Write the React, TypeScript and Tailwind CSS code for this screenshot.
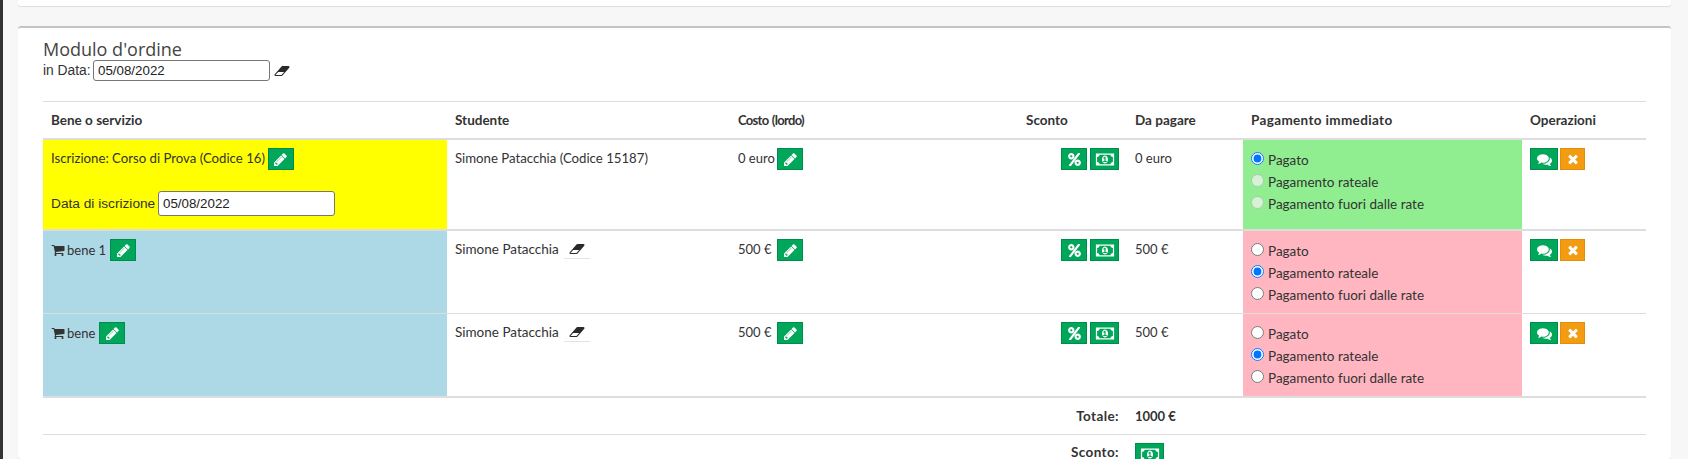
import React from "react";

const P = {
  pencil: ["0 0 1792 1792", "M491 1536l91-91-235-235-91 91v107h128v128h107zm523-928q0-22-22-22-10 0-17 7l-542 542q-7 7-7 17 0 22 22 22 10 0 17-7l542-542q7-7 7-17zm-54-192l416 416-832 832h-416v-416zm683 96q0 53-37 90l-166 166-416-416 166-165q36-38 90-38 53 0 91 38l235 234q37 39 37 91z"],
  percent: ["0 0 1792 1792", "M1408 1280q0-52-38-90t-90-38-90 38-38 90 38 90 90 38 90-38 38-90zm-768-768q0-52-38-90t-90-38-90 38-38 90 38 90 90 38 90-38 38-90zm1024 768q0 159-112.5 271.5t-271.5 112.5-271.5-112.5-112.5-271.5 112.5-271.5 271.5-112.5 271.5 112.5 112.5 271.5zm-96-1088q0 20-13 38l-1056 1408q-19 26-51 26h-160q-26 0-45-19t-19-45q0-20 13-38l1056-1408q19-26 51-26h160q26 0 45 19t19 45zm-672 320q0 159-112.5 271.5t-271.5 112.5-271.5-112.5-112.5-271.5 112.5-271.5 271.5-112.5 271.5 112.5 112.5 271.5z"],
  money: ["0 0 2048 1792", "M832 1152h384v-96h-128v-448h-114l-148 137 77 80q42-37 55-57h2v288h-128v96zm512-256q0 70-21 142t-59.5 134-101.5 101-138 39-138-39-101.5-101-59.5-134-21-142 21-142 59.5-134 101.5-101 138-39 138 39 101.5 101 59.5 134 21 142zm512 256v-512q-106 0-181-75t-75-181h-1152q0 106-75 181t-181 75v512q106 0 181 75t75 181h1152q0-106 75-181t181-75zm128-832v1152q0 26-19 45t-45 19h-1792q-26 0-45-19t-19-45v-1152q0-26 19-45t45-19h1792q26 0 45 19t19 45z"],
  comments: ["0 0 1792 1792", "M1408 768q0 139-94 257t-256.5 186.5-353.5 68.5q-86 0-176-16-124 88-278 128-36 9-86 16h-3q-11 0-20.5-8t-11.5-21q-1-3-1-6.5t.5-6.5 2-6l2.5-5 3.5-5.5 4-5 4.5-5 4-4.5q5-6 23-25t26-29.5 22.5-29 25-38.5 20.5-44q-124-72-195-177t-71-224q0-139 94-257t256.5-186.5 353.5-68.5 353.5 68.5 256.5 186.5 94 257zm384 256q0 120-71 224.5t-195 176.5q10 24 20.5 44t25 38.5 22.5 29 26 29.5 23 25q1 1 4 4.5t4.5 5 4 5 3.5 5.5l2.5 5 2 6 .5 6.5-1 6.5q-3 14-13 22t-22 7q-50-7-86-16-154-40-278-128-90 16-176 16-271 0-472-132 58 4 88 4 161 0 309-45t264-129q125-92 192-212t67-254q0-77-23-152 129 71 204 178t75 230z"],
  times: ["0 0 1792 1792", "M1490 1322q0 40-28 68l-136 136q-28 28-68 28t-68-28l-294-294-294 294q-28 28-68 28t-68-28l-136-136q-28-28-28-68t28-68l294-294-294-294q-28-28-28-68t28-68l136-136q28-28 68-28t68 28l294 294 294-294q28-28 68-28t68 28l136 136q28 28 28 68t-28 68l-294 294 294 294q28 28 28 68z"],
  eraser: ["0 0 2048 1792", "M960 1408l336-384h-768l-336 384h768zm1013-1077q15 34 9.5 71.5t-30.5 65.5l-896 1024q-38 44-96 44h-768q-38 0-69.5-20.5t-47.5-54.5q-15-34-9.5-71.5t30.5-65.5l896-1024q38-44 96-44h768q38 0 70 20.5t47 54.5z"],
  cart: ["0 0 1792 1792", "M704 1536q0 52-38 90t-90 38-90-38-38-90 38-90 90-38 90 38 38 90zm896 0q0 52-38 90t-90 38-90-38-38-90 38-90 90-38 90 38 38 90zm128-1088v512q0 24-16.5 42.5t-40.5 21.5l-1044 122q13 60 13 70 0 16-24 64h920q26 0 45 19t19 45-19 45-45 19h-1024q-26 0-45-19t-19-45q0-11 8-31.5t16-36 21.5-40 15.5-29.5l-177-823h-204q-26 0-45-19t-19-45 19-45 45-19h256q16 0 28.5 6.5t19.5 15.5 13 24.5 8 26 5.5 29.5 4.5 26h1201q26 0 45 19t19 45z"],
} as const;

function Icon({ name, className }: { name: keyof typeof P; className: string }) {
  return (
    <svg viewBox={P[name][0]} className={className} fill="currentColor" aria-hidden="true">
      <path d={P[name][1]} />
    </svg>
  );
}

function Btn({ name, w, warn, icon }: { name: keyof typeof P; w: "w-[25px]" | "w-[26px]" | "w-[28px]" | "w-[29px]"; warn?: boolean; icon?: string }) {
  return (
    <span
      className={`inline-flex h-[22px] ${w} items-center justify-center border align-top text-white ${
        warn ? "border-[#e08e0b] bg-[#f39c12]" : "border-[#008d4c] bg-[#00a65a]"
      }`}
    >
      <Icon name={name} className={icon ?? "h-[15px] w-[15px]"} />
    </span>
  );
}

const moneyIcon = "h-[17px] w-[20px]";

function Sconto() {
  return (
    <div className="flex justify-end gap-[3px]">
      <Btn name="percent" w="w-[26px]" />
      <Btn name="money" w="w-[29px]" icon={moneyIcon} />
    </div>
  );
}

function Ops() {
  return (
    <div className="flex gap-[2px]">
      <Btn name="comments" w="w-[28px]" icon="h-[15px] w-[15px]" />
      <Btn name="times" w="w-[25px]" warn icon="h-[14px] w-[14px]" />
    </div>
  );
}

function Radios({ group, checked, disabled }: { group: string; checked: number; disabled?: boolean }) {
  const labels = ["Pagato", "Pagamento rateale", "Pagamento fuori dalle rate"];
  return (
    <div className="-mb-[1px] flex flex-col pt-[1px]">
      {labels.map((l, i) => (
        <label key={l} className="flex h-[22px] items-center">
          <input
            type="radio"
            name={group}
            defaultChecked={i === checked}
            disabled={disabled && i !== checked}
            className="m-0 mr-[4px] -mt-[3px] h-[13px] w-[13px] shrink-0"
          />
          <span>{l}</span>
        </label>
      ))}
    </div>
  );
}

const td = "border-t align-top border-[#dddddd] p-[8px]";

function BeneRow({ name, thick }: { name: string; thick?: boolean }) {
  const b = thick ? "border-t-2" : "border-t";
  const group = name.replace(" ", "");
  return (
    <tr>
      <td className={`${b} border-[#dddddd] bg-[#add8e6] p-[8px] align-top`}>
        <div className="flex h-[22px] items-center">
          <Icon name="cart" className="mr-[2px] h-[14px] w-[14px] shrink-0 text-[#333]" />
          <span className="mr-[4px] text-[13px]">{name}</span>
          <Btn name="pencil" w="w-[26px]" />
        </div>
      </td>
      <td className={`${b} border-[#dddddd] p-[8px] align-top`}>
        <div className="flex h-[22px] items-start">
          <span className="leading-[20px]">Simone Patacchia</span>
          <span className="ml-[5px] inline-flex h-[20px] w-[26px] items-center justify-center border-b border-[#e4e4e4]">
            <Icon name="eraser" className="h-[14px] w-[16px] text-[#2a2a2a]" />
          </span>
        </div>
      </td>
      <td className={`${b} border-[#dddddd] p-[8px] align-top`}>
        <div className="flex h-[22px] items-start">
          <span className="w-[39px] text-[13px] leading-[20px]">500 €</span>
          <Btn name="pencil" w="w-[26px]" />
        </div>
      </td>
      <td className={`${b} border-[#dddddd] p-[8px] align-top`}>
        <Sconto />
      </td>
      <td className={`${b} border-[#dddddd] p-[8px] align-top`}>
        <div className="text-[13px] leading-[20px]">500 €</div>
      </td>
      <td className={`${b} border-[#dddddd] bg-[#ffb6c1] p-[8px] align-top`}>
        <Radios group={group} checked={1} />
      </td>
      <td className={`${b} border-[#dddddd] p-[8px] align-top`}>
        <Ops />
      </td>
    </tr>
  );
}

export default function App() {
  const inputCls =
    "rounded-[3px] border border-[#767676] bg-white px-[4px] text-[13.33px] text-[#222] [font-family:'Liberation_Sans',Arial,sans-serif]";
  return (
    <div className="flex h-[459px] overflow-hidden bg-[#f7f7f7] text-[13.5px] leading-[20px] text-[#333] [font-family:Lato,sans-serif]">
      <div className="w-[3px] shrink-0 bg-[#333333]" />
      <div className="ml-[15px] w-[1653px]">
        <div className="h-[6px] rounded-b-[3px] bg-white shadow-[0_1px_1px_rgba(0,0,0,0.1)]" />
        <div className="mt-[20px] h-[433px] rounded-[3px] border-t-2 border-[#c4c4c4] bg-white px-[25px] pt-[10px] shadow-[0_1px_1px_rgba(0,0,0,0.1)]">
          <h3 className="m-0 text-[18px] leading-[22px] text-[#444] [font-family:'Open_Sans',sans-serif]">Modulo d'ordine</h3>
          <div className="flex h-[21px] items-center text-[13.8px] [font-family:'Liberation_Sans',Arial,sans-serif]">
            <span className="w-[50px]">in Data:</span>
            <input readOnly value="05/08/2022" className={`${inputCls} h-[21px] w-[177px]`} />
            <Icon name="eraser" className="ml-[4px] h-[14px] w-[16px] text-[#2a2a2a]" />
          </div>
          <table className="mt-[20px] w-[1603px] table-fixed border-collapse">
            <thead>
              <tr className="border-t border-[#dddddd]">
                <th className="w-[404px] border-b-2 border-[#dddddd] p-[8px] text-left font-bold">Bene o servizio</th>
                <th className="w-[283px] border-b-2 border-[#dddddd] p-[8px] text-left font-bold">Studente</th>
                <th className="w-[288px] border-b-2 border-[#dddddd] p-[8px] text-left text-[13px] font-bold tracking-[-0.7px] [word-spacing:1px]">Costo (lordo)</th>
                <th className="w-[109px] border-b-2 border-[#dddddd] p-[8px] text-left font-bold">Sconto</th>
                <th className="w-[116px] border-b-2 border-[#dddddd] p-[8px] text-left font-bold">Da pagare</th>
                <th className="w-[279px] border-b-2 border-[#dddddd] p-[8px] text-left font-bold tracking-[0.35px]">Pagamento immediato</th>
                <th className="w-[124px] border-b-2 border-[#dddddd] p-[8px] text-left font-bold">Operazioni</th>
              </tr>
            </thead>
            <tbody>
              <tr>
                <td className="bg-[#ffff00] p-[8px] pb-[13px] align-top">
                  <div className="flex h-[22px] items-start gap-[3px]">
                    <span className="text-[13.2px] leading-[20px]">Iscrizione: Corso di Prova (Codice 16)</span>
                    <Btn name="pencil" w="w-[26px]" />
                  </div>
                  <div className="mt-[21px] flex h-[25px] items-center text-[13.7px] [font-family:'Liberation_Sans',Arial,sans-serif]">
                    <span className="w-[107px]">Data di iscrizione</span>
                    <input readOnly value="05/08/2022" className={`${inputCls} h-[25px] w-[177px]`} />
                  </div>
                </td>
                <td className="p-[8px] align-top">
                  <div className="text-[13.2px] leading-[20px]">Simone Patacchia (Codice 15187)</div>
                </td>
                <td className="p-[8px] align-top">
                  <div className="flex h-[22px] items-start">
                    <span className="w-[39px] text-[13px] leading-[20px]">0 euro</span>
                    <Btn name="pencil" w="w-[26px]" />
                  </div>
                </td>
                <td className="p-[8px] align-top">
                  <Sconto />
                </td>
                <td className="p-[8px] align-top">
                  <div className="text-[13px] leading-[20px]">0 euro</div>
                </td>
                <td className="bg-[#90ee90] p-[8px] align-top">
                  <Radios group="r0" checked={0} disabled />
                </td>
                <td className="p-[8px] align-top">
                  <Ops />
                </td>
              </tr>
              <BeneRow name="bene 1" thick />
              <BeneRow name="bene" />
              <tr>
                <td colSpan={4} className="border-t-2 border-[#dddddd] p-[8px] text-right font-bold tracking-[0.4px]">Totale:</td>
                <td colSpan={3} className="border-t-2 border-[#dddddd] p-[8px] text-[13px] font-bold">1000 €</td>
              </tr>
              <tr>
                <td colSpan={4} className="border-t border-[#dddddd] pr-[8px] pt-[12px] text-right align-top font-bold leading-[11px] tracking-[0.4px]">Sconto:</td>
                <td colSpan={3} className={td}>
                  <Btn name="money" w="w-[29px]" icon={moneyIcon} />
                </td>
              </tr>
            </tbody>
          </table>
        </div>
      </div>
    </div>
  );
}
